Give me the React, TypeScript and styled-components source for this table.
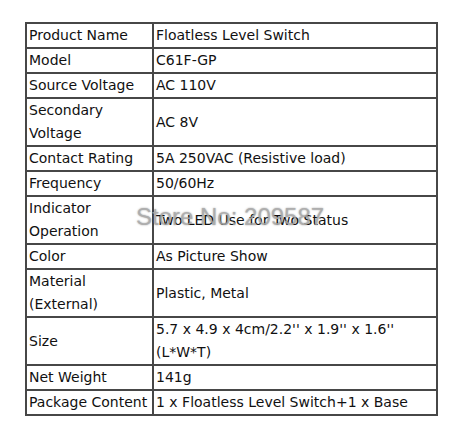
import React from "react";
import styled, { createGlobalStyle } from "styled-components";

const GlobalStyle = createGlobalStyle`
  html, body {
    margin: 0;
    padding: 0;
    background: #ffffff;
  }
`;

const Page = styled.div`
  position: relative;
  width: 462px;
  height: 435px;
  padding: 22px 0 0 25px;
  box-sizing: border-box;
  background: #ffffff;
`;

const SpecGrid = styled.div`
  display: grid;
  grid-template-columns: 125px 282px;
  gap: 2px;
  width: max-content;
  border: 2px solid #474747;
  background: #474747;
  font-family: "DejaVu Sans", "Liberation Sans", sans-serif;
  font-size: 14px;
  color: #111;
`;

const Cell = styled.div<{ $tall?: boolean }>`
  background: #ffffff;
  height: ${(p) => (p.$tall ? 46 : 23)}px;
  line-height: 23px;
  padding-left: 2px;
  display: flex;
  align-items: center;
  white-space: pre-line;
  overflow: hidden;
`;

const Watermark = styled.div`
  position: absolute;
  left: 136px;
  top: 205px;
  font-family: "Liberation Sans", Arial, sans-serif;
  font-size: 24px;
  line-height: 24px;
  color: rgba(170, 170, 170, 0.85);
  text-shadow: 0 0 2px rgba(0, 0, 0, 0.35);
  pointer-events: none;
  white-space: nowrap;
`;

const rows: { label: string; value: string; tall?: boolean }[] = [
  { label: "Product Name", value: "Floatless Level Switch" },
  { label: "Model", value: "C61F-GP" },
  { label: "Source Voltage", value: "AC 110V" },
  { label: "Secondary\nVoltage", value: "AC 8V", tall: true },
  { label: "Contact Rating", value: "5A 250VAC (Resistive load)" },
  { label: "Frequency", value: "50/60Hz" },
  { label: "Indicator\nOperation", value: "Two LED Use for Two Status", tall: true },
  { label: "Color", value: "As Picture Show" },
  { label: "Material\n(External)", value: "Plastic, Metal", tall: true },
  {
    label: "Size",
    value: "5.7 x 4.9 x 4cm/2.2'' x 1.9'' x 1.6''\n(L*W*T)",
    tall: true,
  },
  { label: "Net Weight", value: "141g" },
  { label: "Package Content", value: "1 x Floatless Level Switch+1 x Base" },
];

export default function App() {
  return (
    <Page>
      <GlobalStyle />
      <SpecGrid>
        {rows.map((r) => (
          <React.Fragment key={r.label}>
            <Cell $tall={r.tall}>{r.label}</Cell>
            <Cell $tall={r.tall}>{r.value}</Cell>
          </React.Fragment>
        ))}
      </SpecGrid>
      <Watermark>Store No: 209587</Watermark>
    </Page>
  );
}
